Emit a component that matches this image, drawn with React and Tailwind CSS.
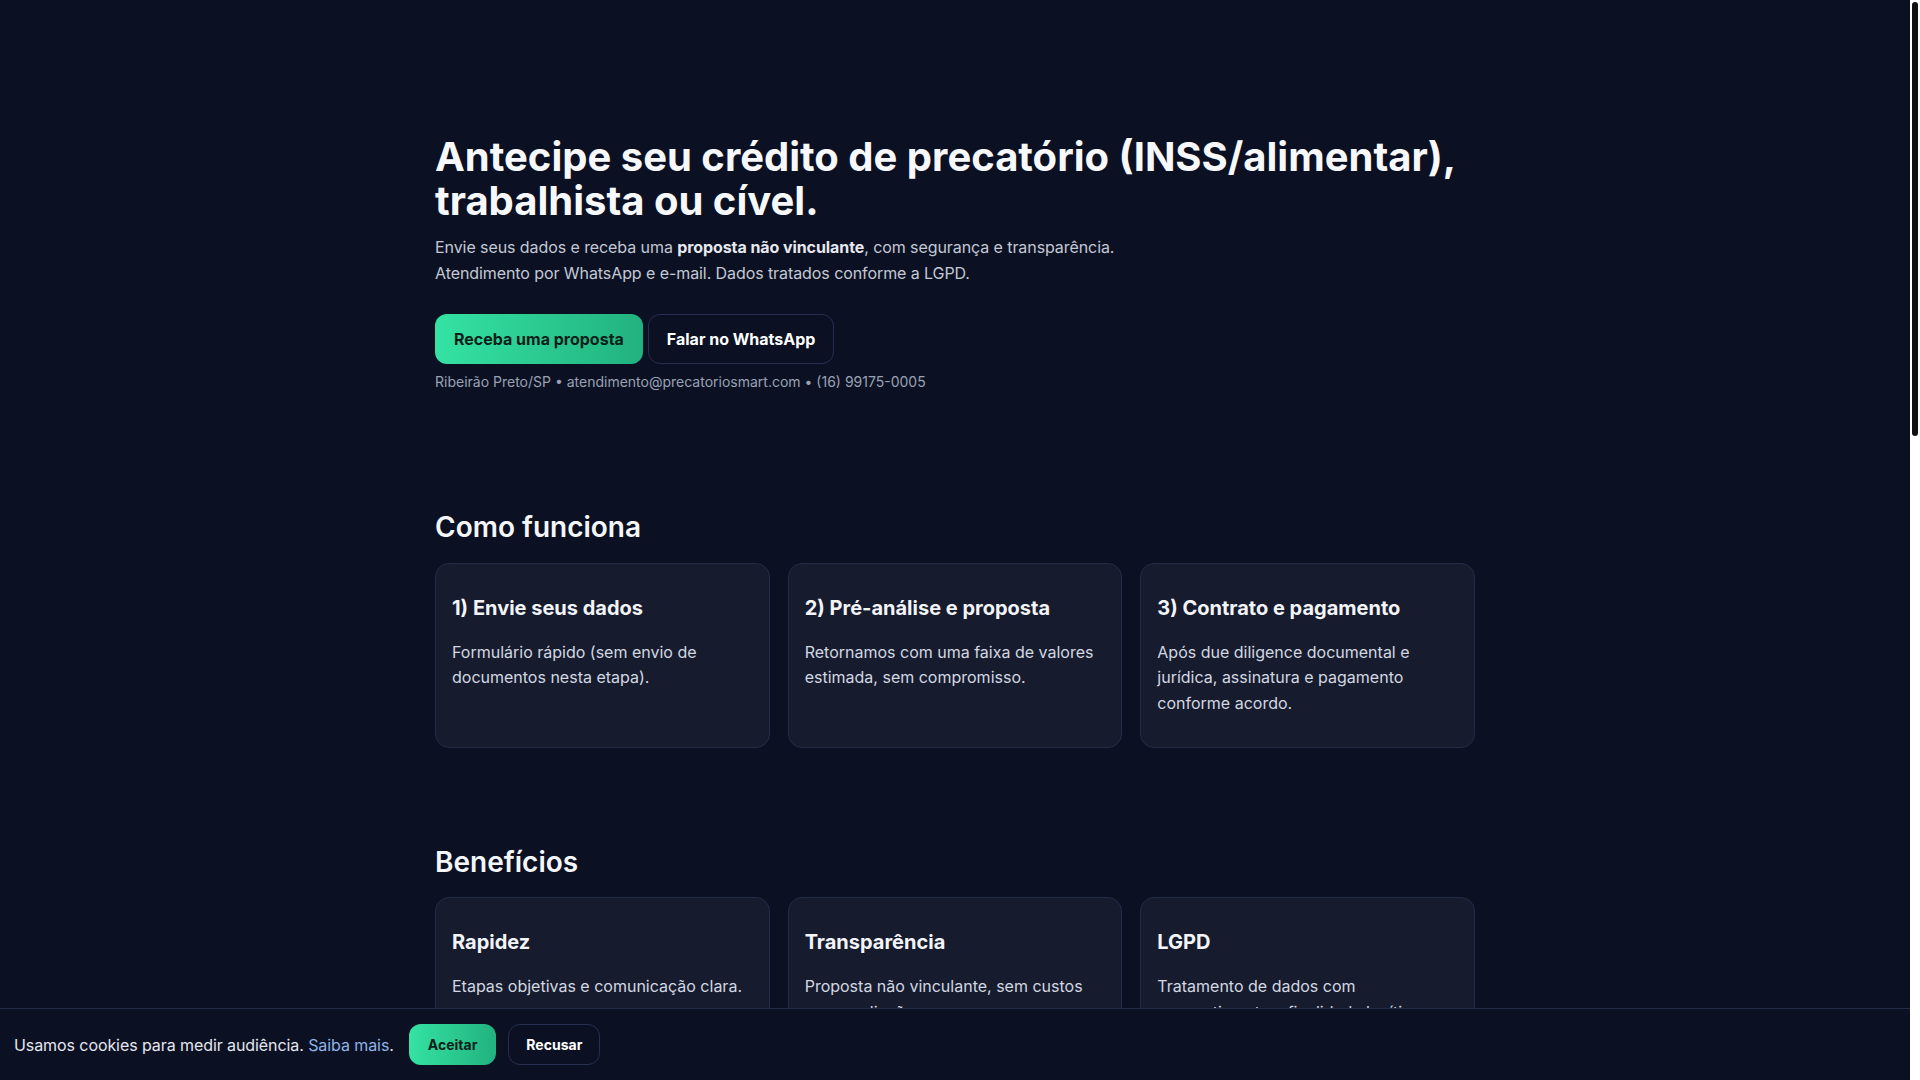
import React from "react";

const steps = [
  { t: "1) Envie seus dados", d: "Formulário rápido (sem envio de documentos nesta etapa)." },
  { t: "2) Pré-análise e proposta", d: "Retornamos com uma faixa de valores estimada, sem compromisso." },
  { t: "3) Contrato e pagamento", d: "Após due diligence documental e jurídica, assinatura e pagamento conforme acordo." },
];

const benefits = [
  { t: "Rapidez", d: "Etapas objetivas e comunicação clara." },
  { t: "Transparência", d: "Proposta não vinculante, sem custos para avaliação." },
  { t: "LGPD", d: "Tratamento de dados com consentimento e finalidade legítima." },
];

const faqs = [
  "Quem pode antecipar um precatório?",
  "A proposta tem algum custo?",
  "Quanto tempo leva o processo?",
  "Preciso enviar documentos agora?",
  "Como meus dados são tratados?",
];

function Card({ t, d }) {
  return (
    <div className="rounded-[14px] border border-[#222b48] bg-[#161c2e] px-4 py-[30px]">
      <h3 className="text-[20px] leading-[28px] font-bold text-[#f3f4f8]">{t}</h3>
      <p className="mt-[18px] text-base leading-[1.6] text-[#d3d7e1]">{d}</p>
    </div>
  );
}

function Section({ title, children }) {
  return (
    <section className="pt-[98px]">
      <h2 className="text-[28px] leading-[1.2] font-semibold text-[#f5f6fa]">{title}</h2>
      <div className="mt-[18px]">{children}</div>
    </section>
  );
}

export default function App() {
  return (
    <div className="flex min-h-screen bg-white font-['Inter',sans-serif]">
      <div className="min-w-0 flex-1 bg-[#0b1123] pb-[120px] text-white">
        <main className="mx-auto w-[1040px]">
          <section className="pt-[135px] pb-[21px]">
            <h1 className="text-[40px] leading-[44px] font-bold text-[#f7f8fb]">
              Antecipe seu crédito de precatório (INSS/alimentar),
              <br />
              trabalhista ou cível.
            </h1>
            <p className="mt-3 text-base leading-[1.6] tracking-[-0.005em] text-[#c3c8d4]">
              Envie seus dados e receba uma <strong className="font-bold text-[#e6e8ee]">proposta não vinculante</strong>, com segurança e transparência.
              <br />
              Atendimento por WhatsApp e e-mail. Dados tratados conforme a LGPD.
            </p>
            <div className="mt-7 flex gap-[5px]">
              <button className="h-[50px] rounded-[12px] bg-gradient-to-r from-[#34e3a3] to-[#22b27f] px-[19px] text-base font-bold text-[#0a1f1a]">
                Receba uma proposta
              </button>
              <button className="h-[50px] rounded-[12px] border border-[#262f50] px-[18px] text-base font-bold text-white">
                Falar no WhatsApp
              </button>
            </div>
            <div className="mt-2 text-sm leading-5 text-[#9aa1b4]">
              Ribeirão Preto/SP • atendimento@precatoriosmart.com • (16) 99175-0005
            </div>
          </section>

          <Section title="Como funciona">
            <div className="grid grid-cols-3 gap-[18px]">
              {steps.map((s) => (
                <Card key={s.t} {...s} />
              ))}
            </div>
          </Section>

          <Section title="Benefícios">
            <div className="grid grid-cols-3 gap-[18px]">
              {benefits.map((s) => (
                <Card key={s.t} {...s} />
              ))}
            </div>
          </Section>

          <Section title="Solicite sua proposta">
            <div className="rounded-[14px] border border-[#222b48] bg-[#161c2e] p-6">
              <div className="grid grid-cols-2 gap-4">
                {["Nome completo", "E-mail", "WhatsApp", "Cidade/UF", "Tipo de precatório", "Valor aproximado"].map((l) => (
                  <label key={l} className="flex flex-col gap-2 text-sm text-[#c3c8d4]">
                    {l}
                    <div className="h-11 rounded-[10px] border border-[#262f50] bg-[#0b1123]" />
                  </label>
                ))}
              </div>
              <label className="mt-4 flex flex-col gap-2 text-sm text-[#c3c8d4]">
                Observações
                <div className="h-28 rounded-[10px] border border-[#262f50] bg-[#0b1123]" />
              </label>
              <button className="mt-6 h-[50px] rounded-[12px] bg-gradient-to-r from-[#34e3a3] to-[#22b27f] px-[19px] text-base font-bold text-[#0a1f1a]">
                Enviar
              </button>
            </div>
          </Section>

          <Section title="Perguntas frequentes">
            <div className="flex flex-col gap-3">
              {faqs.map((q) => (
                <div key={q} className="rounded-[14px] border border-[#222b48] bg-[#161c2e] px-4 py-4 text-base font-semibold text-[#f3f4f8]">
                  {q}
                </div>
              ))}
            </div>
          </Section>

          <footer className="mt-[98px] border-t border-[#1f2742] py-8 text-sm text-[#9aa1b4]">
            © 2025 Precatório Smart • Ribeirão Preto/SP
          </footer>
        </main>
      </div>

      {/* scrollbar */}
      <div className="w-[10px] shrink-0 bg-white pt-[2px]">
        <div className="mx-auto h-[434px] w-[6px] rounded-full bg-[#111111]" />
      </div>

      <div className="fixed bottom-0 left-0 right-[10px] flex h-[72px] items-center border-t border-[#222b48] bg-[#0b1123] px-[14px]">
        <span className="text-base tracking-[-0.005em] text-[#e4e6ee]">
          Usamos cookies para medir audiência. <a className="text-[#8fb3e6]">Saiba mais</a>.
        </span>
        <button className="ml-[15px] h-[41px] rounded-[12px] bg-gradient-to-r from-[#34e3a3] to-[#22b27f] px-[19px] text-sm font-bold text-[#0a1f1a]">
          Aceitar
        </button>
        <button className="ml-3 h-[41px] rounded-[12px] border border-[#262f50] px-[17px] text-sm font-bold text-white">
          Recusar
        </button>
      </div>
    </div>
  );
}
